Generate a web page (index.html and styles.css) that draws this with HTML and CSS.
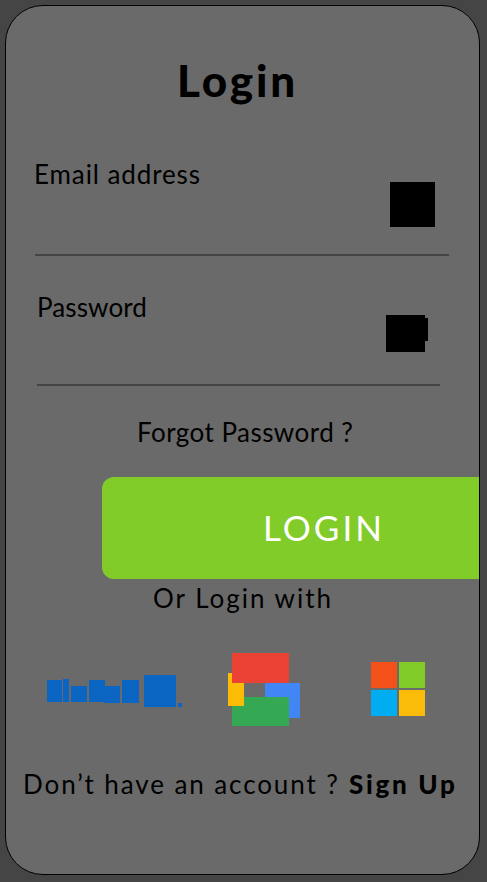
FILE: index.html
```html
<!DOCTYPE html>
<html lang="en">
<head>
<meta charset="utf-8">
<meta name="viewport" content="width=device-width, initial-scale=1">
<title>Login</title>
<link rel="stylesheet" href="styles.css">
</head>
<body>
<main class="card">
  <h1 class="title">Login</h1>
  <div class="field field-email">
    <span class="label label-email">Email address</span>
    <svg class="icon-email" width="45" height="45" viewBox="0 0 45 45"><rect width="45" height="45"/></svg>
  </div>
  <div class="field field-password">
    <span class="label label-password">Password</span>
    <svg class="icon-password" width="42" height="37" viewBox="0 0 42 37"><path d="M0 0H39V3H42V26H39V37H0Z"/></svg>
  </div>
  <a class="forgot">Forgot Password ?</a>
  <div class="login-button" role="button"><span>LOGIN</span></div>
  <p class="alternative">Or Login with</p>
  <div class="providers">
    <svg class="linkedin" width="135" height="32" viewBox="0 0 135 32" fill="#0a66c2">
      <path d="M0 5H15V27H0ZM16 4H22V27H16ZM24 11H40V27H24ZM42 5H58V27H42ZM57 11H73V28H57ZM75 5H92V28H75ZM97 0H129V32H97ZM131 28H135V32H131Z"/>
    </svg>
    <svg class="google" width="72" height="73" viewBox="0 0 72 73">
      <rect x="37" y="30" width="35" height="35" fill="#4285f4"/>
      <rect x="4" y="44" width="57" height="29" fill="#34a853"/>
      <rect x="0" y="20" width="16" height="33" fill="#fbbc05"/>
      <rect x="4" y="0" width="57" height="30" fill="#ea4335"/>
    </svg>
    <svg class="microsoft" width="54" height="54" viewBox="0 0 54 54">
      <rect width="26" height="26" fill="#f35119"/>
      <rect x="28" width="26" height="26" fill="#81cc28"/>
      <rect y="28" width="26" height="26" fill="#00adf0"/>
      <rect x="28" y="28" width="26" height="26" fill="#fbbc09"/>
    </svg>
  </div>
  <p class="signup"><span class="question">Don’t have an account ?</span><a class="signup-link">Sign Up</a></p>
</main>
</body>
</html>
```
FILE: styles.css
```css
* { box-sizing: border-box; }
body {
  margin: 0;
  padding: 5px 7px 7px 5px;
  height: 882px;
  overflow: hidden;
  background: #454545;
  color: #000;
  font-family: Lato, "Liberation Sans", sans-serif;
  font-size: 26px;
  line-height: 32px;
  white-space: nowrap;
}
svg { display: block; flex: none; }
p { margin: 0; }
.card {
  width: 475px;
  height: 870px;
  border: 1px solid #000;
  border-radius: 38px;
  background: #6a6a6a;
  overflow: hidden;
}
.title {
  margin: 0;
  height: 140px;
  padding: 47px 0 0 171px;
  font-size: 44px;
  line-height: 54px;
  font-weight: 900;
  letter-spacing: 2.8px;
}
.field {
  display: flex;
  justify-content: space-between;
  align-items: flex-start;
  border-bottom: 2px solid #454545;
}
.field-email { width: 414px; height: 110px; margin-left: 29px; padding: 11px 14px 0 0; }
.field-password { width: 403px; height: 130px; margin-left: 31px; padding: 34px 12px 0 0; }
.icon-email { margin-top: 25px; }
.icon-password { margin-top: 25px; }
.label { padding-top: 1px; }
.label-email { letter-spacing: 0.9px; margin-left: -1px; }
.label-password { letter-spacing: 0.1px; }
.forgot { display: block; height: 91px; padding: 30px 0 0 131px; letter-spacing: 0.45px; }
.login-button {
  display: flex;
  align-items: center;
  justify-content: center;
  width: 442px;
  height: 102px;
  margin-left: 96px;
  padding: 0 0 1px 2px;
  border-radius: 12px;
  background: #81cc28;
  color: #fff;
  font-size: 35px;
  line-height: 41px;
  letter-spacing: 3px;
}
.alternative { height: 68px; padding: 3px 0 0 147px; letter-spacing: 2px; }
.providers {
  display: flex;
  justify-content: space-between;
  align-items: flex-start;
  height: 86px;
  padding: 0 54px 0 41px;
}
.linkedin { margin-top: 28px; }
.google { margin: 6px 0 0 -25px; }
.microsoft { margin-top: 15px; }
.signup { display: flex; height: 60px; padding: 35px 0 0 17px; }
.question { letter-spacing: 1.9px; width: 326px; }
.signup-link { font-weight: 900; letter-spacing: 2.7px; }
```
